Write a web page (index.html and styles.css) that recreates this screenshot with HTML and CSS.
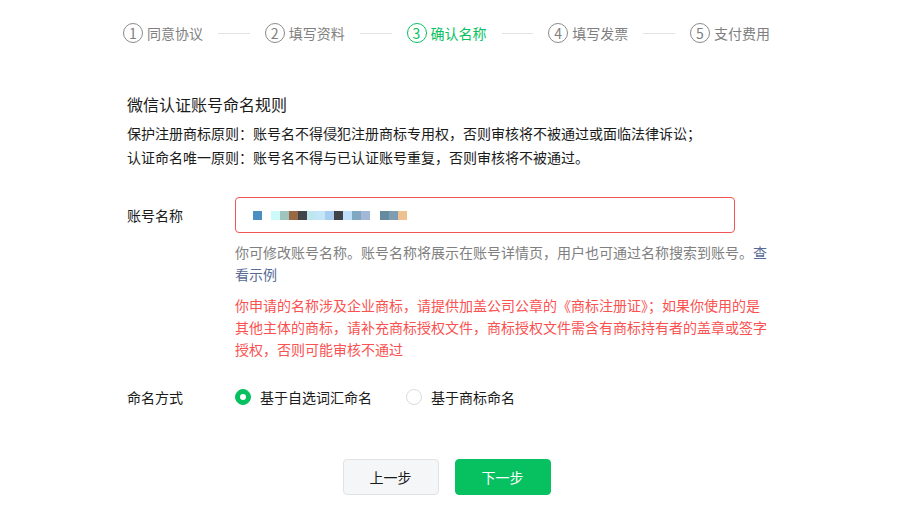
FILE: index.html
```html
<!DOCTYPE html>
<html lang="zh-CN">
<head>
<meta charset="utf-8">
<title>确认名称</title>
<link rel="stylesheet" href="styles.css">
</head>
<body>
<div class="page">
  <ol class="steps">
    <li class="step"><span class="num">1</span><span class="name">同意协议</span></li>
    <li class="sep"></li>
    <li class="step"><span class="num">2</span><span class="name">填写资料</span></li>
    <li class="sep"></li>
    <li class="step current"><span class="num">3</span><span class="name">确认名称</span></li>
    <li class="sep"></li>
    <li class="step"><span class="num">4</span><span class="name">填写发票</span></li>
    <li class="sep"></li>
    <li class="step"><span class="num">5</span><span class="name">支付费用</span></li>
  </ol>

  <div class="content">
    <section class="rules">
      <h2 class="rules-title">微信认证账号命名规则</h2>
      <p class="rule">保护注册商标原则：账号名不得侵犯注册商标专用权，否则审核将不被通过或面临法律诉讼；</p>
      <p class="rule">认证命名唯一原则：账号名不得与已认证账号重复，否则审核将不被通过。</p>
    </section>

    <div class="form">
      <div class="row">
        <div class="label label-input">账号名称</div>
        <div class="field">
          <div class="input">
            <span class="px" style="background:#4a8fbf"></span><span class="px gap"></span><span class="px" style="background:#ccfafa"></span><span class="px" style="background:#9fc5bd"></span><span class="px" style="background:#976a45"></span><span class="px" style="background:#414548"></span><span class="px" style="background:#bde6ee"></span><span class="px" style="background:#c5e6f9"></span><span class="px" style="background:#a9cdf0"></span><span class="px" style="background:#404346"></span><span class="px" style="background:#bfe0fb"></span><span class="px" style="background:#80a8c2"></span><span class="px" style="background:#a3b7d6"></span><span class="px gap2"></span><span class="px" style="background:#668a9e"></span><span class="px" style="background:#7e9cb2"></span><span class="px" style="background:#edc190"></span>
          </div>
          <p class="help">你可修改账号名称。账号名称将展示在账号详情页，用户也可通过名称搜索到账号。<a class="link" href="#">查看示例</a></p>
          <p class="warn">你申请的名称涉及企业商标，请提供加盖公司公章的《商标注册证》；如果你使用的是其他主体的商标，请补充商标授权文件，商标授权文件需含有商标持有者的盖章或签字授权，否则可能审核不通过</p>
        </div>
      </div>

      <div class="row row-radio">
        <div class="label">命名方式</div>
        <div class="radios">
          <label class="radio checked"><span class="dot"></span>基于自选词汇命名</label>
          <label class="radio"><span class="dot"></span>基于商标命名</label>
        </div>
      </div>
    </div>
  </div>

  <div class="actions">
    <button class="btn btn-default">上一步</button>
    <button class="btn btn-primary">下一步</button>
  </div>
</div>
</body>
</html>
```

FILE: styles.css
```css
* { box-sizing: border-box; }
html, body { margin: 0; padding: 0; background: #fff; }
body {
  font-family: "Noto Sans CJK SC", "Noto Sans", sans-serif;
  font-size: 14px;
  color: #1a1a1a;
}
.page {
  margin-left: 123px;
  width: 647px;
}

/* steps */
.steps {
  list-style: none;
  margin: 0;
  padding: 23px 0 0;
  display: flex;
  align-items: center;
  height: 43px;
}
.step {
  display: flex;
  align-items: center;
  color: #7f7f7f;
  font-size: 14px;
  line-height: 20px;
  white-space: nowrap;
}
.step .num {
  width: 20px;
  height: 20px;
  border: 1px solid #8a8a8a;
  border-radius: 50%;
  display: flex;
  align-items: center;
  justify-content: center;
  font-size: 14px;
  line-height: 1;
  margin-right: 4px;
}
.step.current { color: #07c160; }
.step.current .num { border-color: #07c160; }
.sep {
  width: 32px;
  height: 1px;
  background: #e2e2e2;
  margin: 0 15px;
}

/* content */
.content { padding-left: 4px; }
.rules { margin-top: 49px; }
.rules-title {
  margin: 0 0 5px;
  font-size: 16px;
  font-weight: 400;
  line-height: 24px;
  color: #1a1a1a;
}
.rule {
  margin: 0;
  font-size: 14px;
  line-height: 24px;
  color: #1a1a1a;
}

.form { margin-top: 28px; }
.row { display: flex; }
.label {
  width: 108px;
  flex: none;
  font-size: 14px;
  line-height: 24px;
  color: #1a1a1a;
}
.label-input { padding-top: 6px; }
.field { width: 535px; }
.input {
  width: 500px;
  height: 36px;
  border: 1px solid #f25555;
  border-radius: 4px;
  display: flex;
  align-items: center;
  padding-left: 17px;
}
.px {
  display: block;
  width: 9px;
  height: 9px;
  flex: none;
}
.px.gap { width: 9px; }
.px.gap2 { width: 10px; }
.help {
  margin: 8px 0 0;
  font-size: 14px;
  line-height: 22px;
  color: #808080;
}
.link { color: #576b95; text-decoration: none; }
.warn {
  margin: 9px 0 0;
  font-size: 14px;
  line-height: 22px;
  color: #fa5151;
}

.row-radio { margin-top: 25px; align-items: center; }
.radios { display: flex; align-items: center; }
.radio {
  display: flex;
  align-items: center;
  font-size: 14px;
  line-height: 24px;
  color: #1a1a1a;
  margin-right: 34px;
}
.radio .dot {
  width: 16px;
  height: 16px;
  border-radius: 50%;
  border: 1px solid #dcdcdc;
  background: #fff;
  margin-right: 9px;
  position: relative;
}
.radio.checked .dot {
  background: #07c160;
  border-color: #07c160;
}
.radio.checked .dot::after {
  content: "";
  position: absolute;
  left: 4px;
  top: 4px;
  width: 6px;
  height: 6px;
  border-radius: 50%;
  background: #fff;
}

/* actions */
.actions {
  margin-top: 50px;
  display: flex;
  justify-content: center;
  gap: 16px;
}
.btn {
  width: 96px;
  height: 36px;
  border-radius: 4px;
  font-family: inherit;
  font-size: 14px;
  cursor: pointer;
}
.btn-default {
  background: #f5f6f7;
  border: 1px solid #e1e2e4;
  color: #1a1a1a;
}
.btn-primary {
  background: #07c160;
  border: 1px solid #07c160;
  color: #fff;
}
```
